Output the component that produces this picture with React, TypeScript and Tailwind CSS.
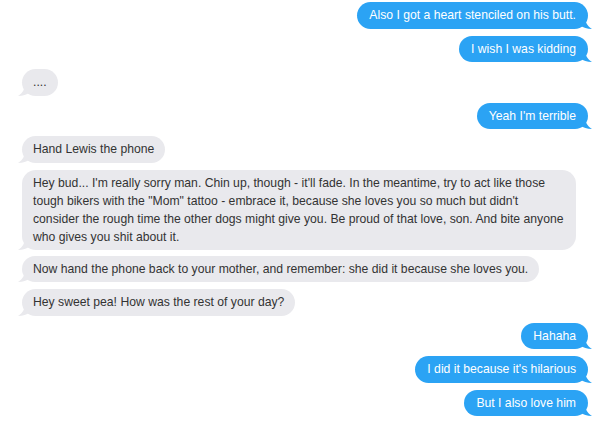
import React from "react";

const BLUE = "#2ba3f4";
const GRAY = "#e9e9ed";

function Tail({ side, color }: { side: "left" | "right"; color: string }) {
  if (side === "right") {
    return (
      <svg
        className="absolute bottom-0 right-[-5px]"
        width="12"
        height="14"
        viewBox="0 0 12 14"
      >
        <path d="M0 0 L4 0 C4 7 6 11 11 14 C6 14 2 12.5 0 11 Z" fill={color} />
      </svg>
    );
  }
  return (
    <svg
      className="absolute bottom-0 left-[-5px]"
      width="12"
      height="14"
      viewBox="0 0 12 14"
    >
      <path d="M12 0 L8 0 C8 7 6 11 1 14 C6 14 10 12.5 12 11 Z" fill={color} />
    </svg>
  );
}

function Out({ children }: { children: React.ReactNode }) {
  return (
    <div className="flex justify-end">
      <div
        className="relative rounded-[14px] px-[12px] py-[4px] text-[12.2px] leading-[18.5px] text-white whitespace-nowrap"
        style={{ backgroundColor: BLUE }}
      >
        <span className="relative z-10">{children}</span>
        <Tail side="right" color={BLUE} />
      </div>
    </div>
  );
}

function In({ children, wide }: { children: React.ReactNode; wide?: boolean }) {
  return (
    <div className="flex justify-start">
      <div
        className={
          wide
            ? "relative w-[554px] rounded-[14px] px-[11px] py-[4px] text-[12.2px] leading-[18px] text-[#333] whitespace-nowrap"
            : "relative rounded-[14px] px-[11px] py-[4px] text-[12.2px] leading-[18.5px] text-[#333] whitespace-nowrap"
        }
        style={{ backgroundColor: GRAY }}
      >
        <span className="relative z-10">{children}</span>
        <Tail side="left" color={GRAY} />
      </div>
    </div>
  );
}

export default function App() {
  return (
    <div
      className="w-[604px] h-[432px] bg-white overflow-hidden flex flex-col gap-[7px] pt-[2px] pl-[22px] pr-[16px]"
      style={{ fontFamily: '"Liberation Sans", Arial, Helvetica, sans-serif' }}
    >
      <Out>Also I got a heart stenciled on his butt.</Out>
      <Out>I wish I was kidding</Out>
      <In>....</In>
      <Out>Yeah I'm terrible</Out>
      <In>Hand Lewis the phone</In>
      <div className="-mb-[1px]">
        <In wide>
          Hey bud... I'm really sorry man. Chin up, though - it'll fade. In the meantime, try to act like those
          <br />
          tough bikers with the "Mom" tattoo - embrace it, because she loves you so much but didn't
          <br />
          consider the rough time the other dogs might give you. Be proud of that love, son. And bite anyone
          <br />
          who gives you shit about it.
        </In>
      </div>
      <In>Now hand the phone back to your mother, and remember: she did it because she loves you.</In>
      <In>Hey sweet pea! How was the rest of your day?</In>
      <Out>Hahaha</Out>
      <Out>I did it because it's hilarious</Out>
      <Out>But I also love him</Out>
    </div>
  );
}
